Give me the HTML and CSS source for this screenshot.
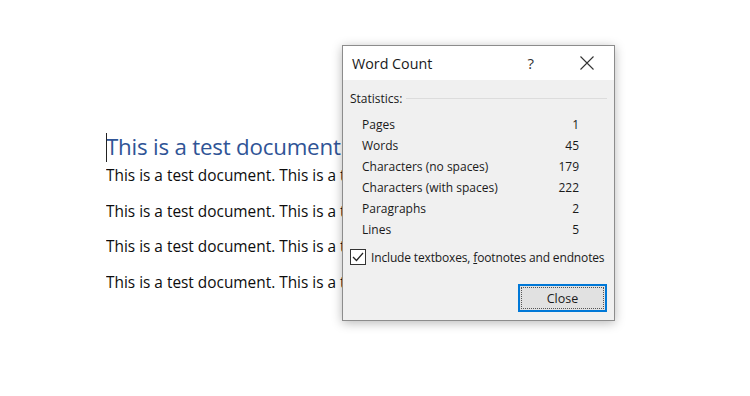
FILE: index.html
```html
<!DOCTYPE html>
<html lang="en">

<head>
    <meta charset="UTF-8">
    <meta name="viewport" content="width=device-width, initial-scale=1.0">
    <title>Word Count</title>
    <link rel="stylesheet" href="styles.css">
</head>

<body>
    <div class="page">
        <h1 class="heading"><span class="cursor"></span>This is a test document</h1>
        <p class="line">This is a test document. This is a test document.</p>
        <p class="line">This is a test document. This is a test document.</p>
        <p class="line">This is a test document. This is a test document.</p>
        <p class="line">This is a test document. This is a test document.</p>
    </div>

    <div class="dialog">
        <div class="titlebar">
            <span class="title">Word Count</span>
            <span class="help">?</span>
            <svg class="close-x" width="14" height="14" viewBox="0 0 14 14">
                <path d="M0.5 0.5 L13.5 13.5 M13.5 0.5 L0.5 13.5" stroke="#333" stroke-width="1.1" fill="none"/>
            </svg>
        </div>
        <div class="content">
            <div class="group-head">
                <span>Statistics:</span>
                <span class="rule"></span>
            </div>
            <div class="stats">
                <div class="row"><span>Pages</span><span>1</span></div>
                <div class="row"><span>Words</span><span>45</span></div>
                <div class="row"><span>Characters (no spaces)</span><span>179</span></div>
                <div class="row"><span>Characters (with spaces)</span><span>222</span></div>
                <div class="row"><span>Paragraphs</span><span>2</span></div>
                <div class="row"><span>Lines</span><span>5</span></div>
            </div>
            <label class="check">
                <span class="box">
                    <svg width="14" height="14" viewBox="0 0 14 14">
                        <path d="M2 7 L5.5 10.5 L12 3" stroke="#222" stroke-width="1.3" fill="none"/>
                    </svg>
                </span>
                <span>Include textboxes, <u>f</u>ootnotes and endnotes</span>
            </label>
            <div class="actions">
                <button class="btn">Close</button>
            </div>
        </div>
    </div>
</body>

</html>
```

FILE: styles.css
```css
body {
    margin: 0;
    background-color: #ffffff;
    font-family: "Open Sans", "Noto Sans", sans-serif;
    overflow: hidden;
}

/* the dialog hides the rest of each line */
.page {
    margin: 132px 0 0 106px;
    width: 236px;
    overflow: hidden;
    white-space: nowrap;
}

.heading {
    position: relative;
    margin: 0 0 4px 0;
    font-size: 22.3px;
    font-weight: normal;
    line-height: 30px;
    color: #2f5496;
    letter-spacing: -0.2px;
}

.cursor {
    position: absolute;
    left: 0;
    top: 1px;
    width: 1px;
    height: 29px;
    background-color: #222;
}

.line {
    margin: 0 0 15.5px 0;
    font-size: 15.4px;
    line-height: 20px;
    color: #0d0d0d;
}

/* dialog sits over the document */
.dialog {
    position: absolute;
    left: 342px;
    top: 45px;
    width: 271px;
    height: 274px;
    border: 1px solid #8c8c8c;
    background-color: #f0f0f0;
    box-shadow: 0 2px 10px rgba(0, 0, 0, 0.28);
    display: flex;
    flex-direction: column;
    font-size: 12px;
    color: #1a1a1a;
    white-space: nowrap;
}

.titlebar {
    height: 34px;
    background-color: #ffffff;
    display: flex;
    align-items: center;
    padding-left: 9px;
}

.title {
    font-size: 14.3px;
    flex: 1;
}

.help {
    font-size: 15px;
    color: #333;
    margin-right: 46px;
}

.close-x {
    margin-right: 20px;
}

.content {
    flex: 1;
    display: flex;
    flex-direction: column;
    padding: 9px 7px 8px 7px;
}

.group-head {
    display: flex;
    align-items: center;
    gap: 4px;
    height: 18px;
}

.rule {
    flex: 1;
    height: 1px;
    background-color: #dcdcdc;
}

.stats {
    display: flex;
    flex-direction: column;
    padding: 7px 28px 0 12px;
}

.row {
    display: flex;
    justify-content: space-between;
    height: 21px;
    line-height: 21px;
}

.check {
    display: flex;
    align-items: center;
    gap: 5px;
    margin-top: 6px;
    height: 22px;
    letter-spacing: -0.15px;
}

.box {
    width: 14px;
    height: 14px;
    border: 1px solid #333;
    background-color: #fff;
    display: flex;
}

.actions {
    margin-top: auto;
    display: flex;
    justify-content: flex-end;
}

.btn {
    width: 89px;
    height: 28px;
    border: 2px solid #0078d7;
    background-color: #e1e1e1;
    outline: 1px dotted #555;
    outline-offset: -4px;
    font-family: "Open Sans", "Noto Sans", sans-serif;
    font-size: 12.5px;
    color: #1a1a1a;
    padding: 0;
}
```
